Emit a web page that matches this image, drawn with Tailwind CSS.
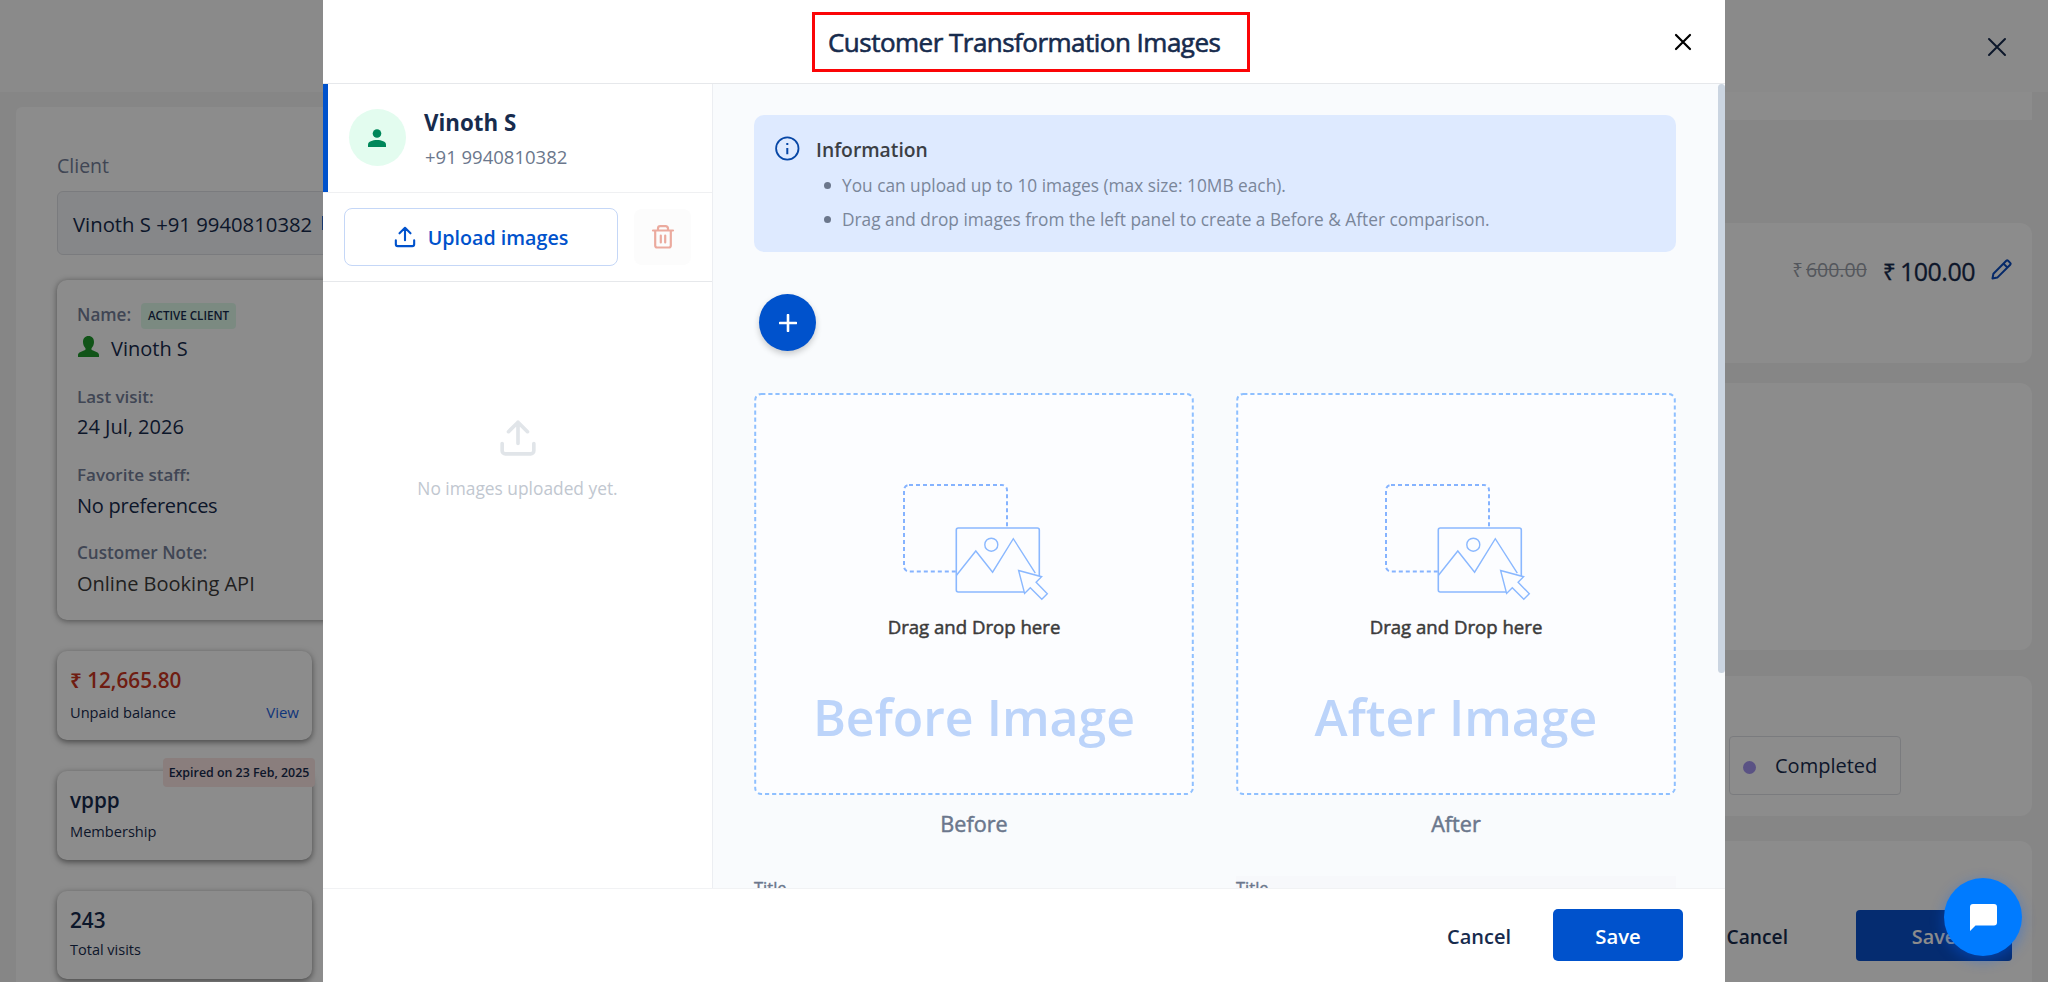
<!DOCTYPE html>
<html lang="en">
<head>
  <meta charset="UTF-8" />
  <meta name="viewport" content="width=device-width, initial-scale=1.0"/>
  <title>Customer Transformation Images</title>
  <script src="https://cdn.jsdelivr.net/npm/@tailwindcss/browser@4"></script>
</head>

<body class="h-screen overflow-hidden bg-[#f5f5f5] text-[#172b4d] font-['Open_Sans','Noto_Sans',sans-serif]">

  <!-- SHARED DRAWINGS -->
  <svg class="hidden">
    <symbol id="upload" viewBox="0 0 24 24" fill="none" stroke="currentColor" stroke-width="2.300" stroke-linecap="round" stroke-linejoin="round">
      <path d="M2 15.500v4.500a2 2 0 0 0 2 2h16a2 2 0 0 0 2-2v-4.500M12 15.500V2M6 8l6-6 6 6"/>
    </symbol>
    <symbol id="drop-art" viewBox="0 0 148 118" fill="none" stroke="#8ab8ff">
      <rect x="2" y="2" width="103" height="86.500" rx="5" stroke-width="2" stroke-dasharray="4 3" stroke="#85b3ff"/>
      <path d="M54.500 47a2 2 0 0 1 2-2h79a2 2 0 0 1 2 2v62H56.500a2 2 0 0 1-2-2z" fill="#fcfdff" stroke="none"/>
      <path d="M137.300 93V47a2 2 0 0 0-2-2H56.300a2 2 0 0 0-2 2v60a2 2 0 0 0 2 2h66" stroke-width="1.600"/>
      <circle cx="89.300" cy="61.700" r="6.500" stroke-width="1.400"/>
      <path d="M54.300 92.500 73.800 68l16.800 21.200 20.700-33.500 22 34.500" stroke-width="1.400"/>
      <path d="m116.600 87.500 23 6.200-5.500 5.600 11.200 11.500-5.500 5.500-11.500-11.600-5.700 5.800z" stroke-width="1.400" fill="#fcfdff"/>
    </symbol>
  </svg>

  <!-- PAGE BEHIND THE MODAL -->
  <header class="h-[92px] bg-[#fbfbfb] flex justify-end pr-[41px] pt-[37px]">
    <svg class="w-5 h-5" viewBox="0 0 20 20" stroke="#172b4d" stroke-width="2" stroke-linecap="round"><path d="M2 2l16 16M18 2 2 18"/></svg>
  </header>

  <div class="flex pl-4 pr-4">
    <aside class="mt-[15px] w-[420px] h-[900px] bg-white rounded-md pl-[41px] pt-[45px]">
      <p class="text-[19.5px] leading-7 text-[#75809a]">Client</p>
      <div class="mt-[11px] h-16 flex items-center gap-3 rounded-md border border-[#dfe1e6] bg-[#f4f6f9] pl-[15px] text-[20.3px] whitespace-nowrap">
        <span class="w-[237px] pt-0.5">Vinoth S +91 9940810382</span>
        <span class="w-4 h-[14px] bg-[#2f66c9]"></span>
      </div>

      <div class="mt-[25px] h-[340px] rounded-[10px] bg-white pl-5 pt-[23px] shadow-[0_1px_6px_rgba(0,0,0,0.45)] text-[20px]">
        <div class="flex items-start gap-[10px]">
          <span class="w-[54px] text-[17.1px] leading-[23px] font-semibold text-[#75809a]">Name:</span>
          <span class="w-[95px] h-[26px] rounded bg-[#e0fcec] text-center text-[11.6px] leading-[26px] font-semibold">ACTIVE CLIENT</span>
        </div>
        <div class="mt-[5px] flex leading-[30px] gap-3">
          <svg class="ml-px mt-0.5 w-[21px] h-[21px]" viewBox="0 0 21 21" fill="#1f9a2d"><path d="M10.500 0C7 0 5 2.500 5 6c0 2.500 1 4.500 2.300 6 .6 1.200.2 1.900-.8 2.300L2 16.200C.7 16.800 0 17.700 0 19v2h21v-2c0-1.300-.7-2.200-2-2.800l-4.500-1.900c-1-.4-1.400-1.100-.8-2.300C15 10.500 16 8.500 16 6c0-3.500-2-6-5.500-6z"/></svg>
          <span>Vinoth S</span>
        </div>
        <p class="mt-[21px] text-[17px] leading-6 font-semibold text-[#75809a]">Last visit:</p>
        <p class="mt-[3px] leading-[30px]">24 Jul, 2026</p>
        <p class="mt-[21px] text-[17px] leading-6 font-semibold text-[#75809a]">Favorite staff:</p>
        <p class="mt-1 leading-[30px] tracking-[-0.25px]">No preferences</p>
        <p class="mt-5 text-[17.1px] leading-6 font-semibold text-[#75809a]">Customer Note:</p>
        <p class="mt-1 leading-[30px] text-[#3b3b3b]">Online Booking API</p>
      </div>

      <div class="mt-[31px] w-[255px] h-[89px] rounded-[10px] bg-white px-[13px] pt-[15px] shadow-[0_2px_6px_rgba(0,0,0,0.5)]">
        <p class="text-[20.7px] leading-7 font-semibold text-[#ca3521]">₹ 12,665.80</p>
        <p class="mt-[6px] flex justify-between text-[14.6px] leading-6"><span>Unpaid balance</span><span class="text-[15px] text-[#1d63e0]">View</span></p>
      </div>
      <div class="relative mt-[31px] w-[255px] h-[89px] rounded-[10px] bg-white px-[13px] pt-[15px] shadow-[0_2px_6px_rgba(0,0,0,0.5)]">
        <span class="absolute -top-[13px] -right-[3px] w-[152px] h-[29px] rounded bg-[#fbe6e3] text-center text-[12.4px] leading-[29px] font-semibold whitespace-nowrap">Expired on 23 Feb, 2025</span>
        <p class="text-[20.7px] leading-7 font-semibold">vppp</p>
        <p class="mt-[5px] text-[14.6px] leading-6">Membership</p>
      </div>
      <div class="mt-[31px] w-[255px] h-[88px] rounded-[10px] bg-white px-[13px] pt-[15px] shadow-[0_2px_6px_rgba(0,0,0,0.5)]">
        <p class="text-[20.7px] leading-7 font-semibold">243</p>
        <p class="mt-1 text-[14.5px] leading-6">Total visits</p>
      </div>
    </aside>

    <section class="flex-1 ml-4">
      <div class="h-7 bg-white"></div>
      <div class="mt-[103px] h-[140px] rounded-[12px] bg-white flex justify-end items-start pt-[31px] pr-[20px]">
        <span class="text-[18.5px] leading-8 text-[#9a9fa9]">₹</span>
        <span class="ml-[3px] text-[19.5px] leading-8 line-through text-[#9a9fa9]">600.00</span>
        <span class="ml-4 text-[23px] leading-[34px] [-webkit-text-stroke:0.3px]">₹</span>
        <span class="ml-[4px] text-[25px] leading-[34px] tracking-[-0.5px] [-webkit-text-stroke:0.3px]">100.00</span>
        <svg class="ml-4 mt-[5px] w-[21px] h-[21px]" viewBox="0 0 21 21" fill="none" stroke="#0b4cc0" stroke-width="2" stroke-linejoin="round"><path d="M1.500 19.500l.9-4.800L15.300 1.800a1.300 1.300 0 0 1 1.800 0l2.100 2.100a1.300 1.300 0 0 1 0 1.800L6.300 18.600zM12.500 4.600l3.900 3.900"/></svg>
      </div>
      <div class="mt-[20px] h-[267px] rounded-[12px] bg-white"></div>
      <div class="mt-[26px] h-[140px] rounded-[12px] bg-white flex justify-end pr-[131px] pt-[60px]">
        <div class="w-[172px] h-[59px] border border-[#dfe1e6] rounded flex items-center pl-[13px]">
          <span class="mt-1 w-[13px] h-[13px] rounded-full bg-[#a595f0]"></span>
          <span class="ml-[19px] pt-px text-[20px]">Completed</span>
        </div>
      </div>
      <div class="mt-[25px] h-[180px] rounded-[12px] bg-white flex justify-end items-start pt-[69px] pr-5">
        <span class="text-[19.2px] leading-[53px] font-semibold mr-[68px]">Cancel</span>
        <span class="w-[156px] h-[51px] rounded bg-[#0a50cc] text-white text-[19.8px] leading-[53px] font-semibold text-center">Save</span>
      </div>
    </section>
  </div>

  <!-- MODAL -->
  <div class="fixed inset-0 bg-black/45 flex justify-center">
    <div class="w-[1402px] h-full bg-white flex flex-col">

      <div class="relative h-[84px] shrink-0 border-b border-[#e6e8eb] pt-3 pl-[489px]">
        <h1 class="w-[438px] h-[60px] border-[3px] border-[#fb0507] pl-[13px] text-[26px] leading-[55px] tracking-[-0.52px] [-webkit-text-stroke:0.6px] whitespace-nowrap">Customer Transformation Images</h1>
        <svg class="absolute right-[32px] top-[32px] w-5 h-5" viewBox="0 0 20 20" stroke="#000" stroke-width="2.200" stroke-linecap="round"><path d="M3 3l14 14M17 3 3 17"/></svg>
      </div>

      <div class="flex flex-1 min-h-0">
        <!-- left panel -->
        <div class="w-[390px] shrink-0 border-r border-[#eceef2]">
          <div class="h-[109px] border-b border-[#eff0f2] flex">
            <div class="w-[5px] h-[108px] bg-[#0052cc]"></div>
            <div class="ml-[21px] mt-[25px] w-[57px] h-[57px] rounded-full bg-[#e3fcef] flex items-center justify-center">
              <svg class="mr-px w-[18px] h-[18px]" viewBox="0 0 18 18" fill="#00875a"><circle cx="9" cy="4.500" r="4.300"/><path d="M0 18v-2.500C0 12.500 4.500 11 9 11s9 1.500 9 4.500V18z"/></svg>
            </div>
            <div class="ml-[18px] pt-[23px]">
              <p class="text-[22.3px] leading-8 font-bold">Vinoth S</p>
              <p class="ml-px mt-[4px] text-[18.5px] leading-7 text-[#6b778c]">+91 9940810382</p>
            </div>
          </div>
          <div class="h-[89px] border-b border-[#e6e8eb] flex pl-[21px] pt-[15px] gap-4">
            <button class="w-[274px] h-[58px] rounded-lg border border-[#c5d7f7] text-[#0052cc] flex items-center justify-center gap-3 text-[19.7px] font-semibold">
              <svg class="w-[22px] h-[22px]"><use href="#upload"/></svg>
              <span class="pt-0.5">Upload images</span>
            </button>
            <button class="mt-px w-[57px] h-[56px] rounded-lg bg-[#fcfcfc] flex items-center justify-center">
              <svg class="w-6 h-6" viewBox="0 0 24 24" fill="none" stroke="#ebaa9e" stroke-width="2.200" stroke-linecap="round" stroke-linejoin="round"><path d="M2 5.500h20M4.200 5.500v15a2 2 0 0 0 2 2h11.600a2 2 0 0 0 2-2v-15M7 5.500V3.500a2.300 2.300 0 0 1 2.300-2.300h5.400A2.300 2.300 0 0 1 17 3.500v2M9.800 10.500v7M14.200 10.500v7"/></svg>
            </button>
          </div>
          <div class="flex flex-col items-center pt-[137px]">
            <svg class="w-[38px] h-[38px] text-[#e1e5e9]"><use href="#upload"/></svg>
            <p class="mt-[17px] text-[17.35px] leading-7 text-[#c1c7d0]">No images uploaded yet.</p>
          </div>
        </div>

        <!-- right panel -->
        <div class="relative flex-1 overflow-hidden bg-[#f9fbfd] pl-[41px] pr-[49px] pt-[31px]">
          <div class="absolute top-0 right-0 w-[7px] h-[589px] rounded-full bg-[#cbd5e1]"></div>

          <div class="h-[137px] rounded-[10px] bg-[#deeaff] flex pl-5 pt-[21px]">
            <svg class="w-[26px] h-[26px]" viewBox="0 0 26 26" fill="none" stroke="#0747a6" stroke-width="1.800"><circle cx="13.300" cy="12.500" r="11.200"/><path d="M13.300 12v6.200M13.300 7v2" stroke-width="2"/></svg>
            <div class="ml-4">
              <p class="text-[19.3px] leading-7 font-semibold text-[#3b3f45]">Information</p>
              <ul class="mt-[5px] text-[17.3px] leading-[33.5px] text-[#7a869a]">
                <li class="flex items-center"><span class="ml-[8px] mr-[11px] w-[7px] h-[7px] rounded-full bg-[#6b778c]"></span>You can upload up to 10 images (max size: 10MB each).</li>
                <li class="flex items-center"><span class="ml-[8px] mr-[11px] w-[7px] h-[7px] rounded-full bg-[#6b778c]"></span>Drag and drop images from the left panel to create a Before &amp; After comparison.</li>
              </ul>
            </div>
          </div>

          <button class="mt-[42px] ml-[5px] w-[57px] h-[57px] rounded-full bg-[#0052cc] flex items-center justify-center shadow-[0_3px_6px_rgba(0,0,0,0.2)]">
            <svg class="w-[18px] h-[18px]" viewBox="0 0 18 18" stroke="#fff" stroke-width="2.600" stroke-linecap="round"><path d="M9 1v16M1 9h16"/></svg>
          </button>

          <div class="mt-[42px] flex gap-[42px]">
            <div class="w-[440px] text-center">
              <div class="relative h-[402px] rounded-lg bg-[#fcfdff] flex flex-col items-center pt-[90px]">
                <svg class="absolute inset-0 w-full h-full" fill="none" stroke="#8fc0ff" stroke-width="2" stroke-dasharray="4.200 2.900"><rect x="1.200" y="1" width="437.600" height="400" rx="6"/></svg>
                <svg class="ml-[3px] w-[148px] h-[118px]"><use href="#drop-art"/></svg>
                <p class="mt-[12px] text-[18.6px] leading-7 text-[#3b3b3b] [-webkit-text-stroke:0.5px]">Drag and Drop here</p>
                <p class="mt-[40px] text-[50px] leading-[72px] font-semibold text-[#bcd4fa]">Before Image</p>
              </div>
              <p class="mt-[13px] text-[21.600px] leading-8 text-[#6b778c] [-webkit-text-stroke:0.5px]">Before</p>
              <p class="mt-9 text-left text-[16.500px] leading-6 text-[#6b778c] [-webkit-text-stroke:0.4px]">Title</p>
            </div>
            <div class="w-[440px] text-center">
              <div class="relative h-[402px] rounded-lg bg-[#fcfdff] flex flex-col items-center pt-[90px]">
                <svg class="absolute inset-0 w-full h-full" fill="none" stroke="#8fc0ff" stroke-width="2" stroke-dasharray="4.200 2.900"><rect x="1.200" y="1" width="437.600" height="400" rx="6"/></svg>
                <svg class="ml-[3px] w-[148px] h-[118px]"><use href="#drop-art"/></svg>
                <p class="mt-[12px] text-[18.6px] leading-7 text-[#3b3b3b] [-webkit-text-stroke:0.5px]">Drag and Drop here</p>
                <p class="mt-[40px] text-[50px] leading-[72px] font-semibold text-[#bcd4fa]">After Image</p>
              </div>
              <p class="mt-[13px] text-[21.600px] leading-8 text-[#6b778c] [-webkit-text-stroke:0.5px]">After</p>
              <p class="mt-9 text-left text-[16.500px] leading-6 text-[#6b778c] bg-[#f7f8fb] [-webkit-text-stroke:0.4px]">Title</p>
            </div>
          </div>
        </div>
      </div>

      <div class="h-[94px] shrink-0 border-t border-[#f1f2f4] flex justify-end items-start pt-5 pr-[42px]">
        <button class="mr-[42px] text-[20px] leading-[55px] font-semibold">Cancel</button>
        <button class="w-[130px] h-[52px] rounded-[5px] bg-[#0052cc] text-white text-[20.3px] leading-[55px] font-semibold">Save</button>
      </div>
    </div>
  </div>

  <!-- CHAT BUTTON -->
  <button class="fixed right-[26px] bottom-[26px] w-[78px] h-[78px] rounded-full bg-[#007bff] flex items-center justify-center shadow-[0_4px_14px_rgba(0,100,255,0.4)]">
    <svg class="w-[27px] h-[27px]" viewBox="0 0 27 27" fill="#fff"><path d="M3 0h21a3 3 0 0 1 3 3v15.500a3 3 0 0 1-3 3H5.500L0 27V3a3 3 0 0 1 3-3z"/></svg>
  </button>

</body>
</html>
